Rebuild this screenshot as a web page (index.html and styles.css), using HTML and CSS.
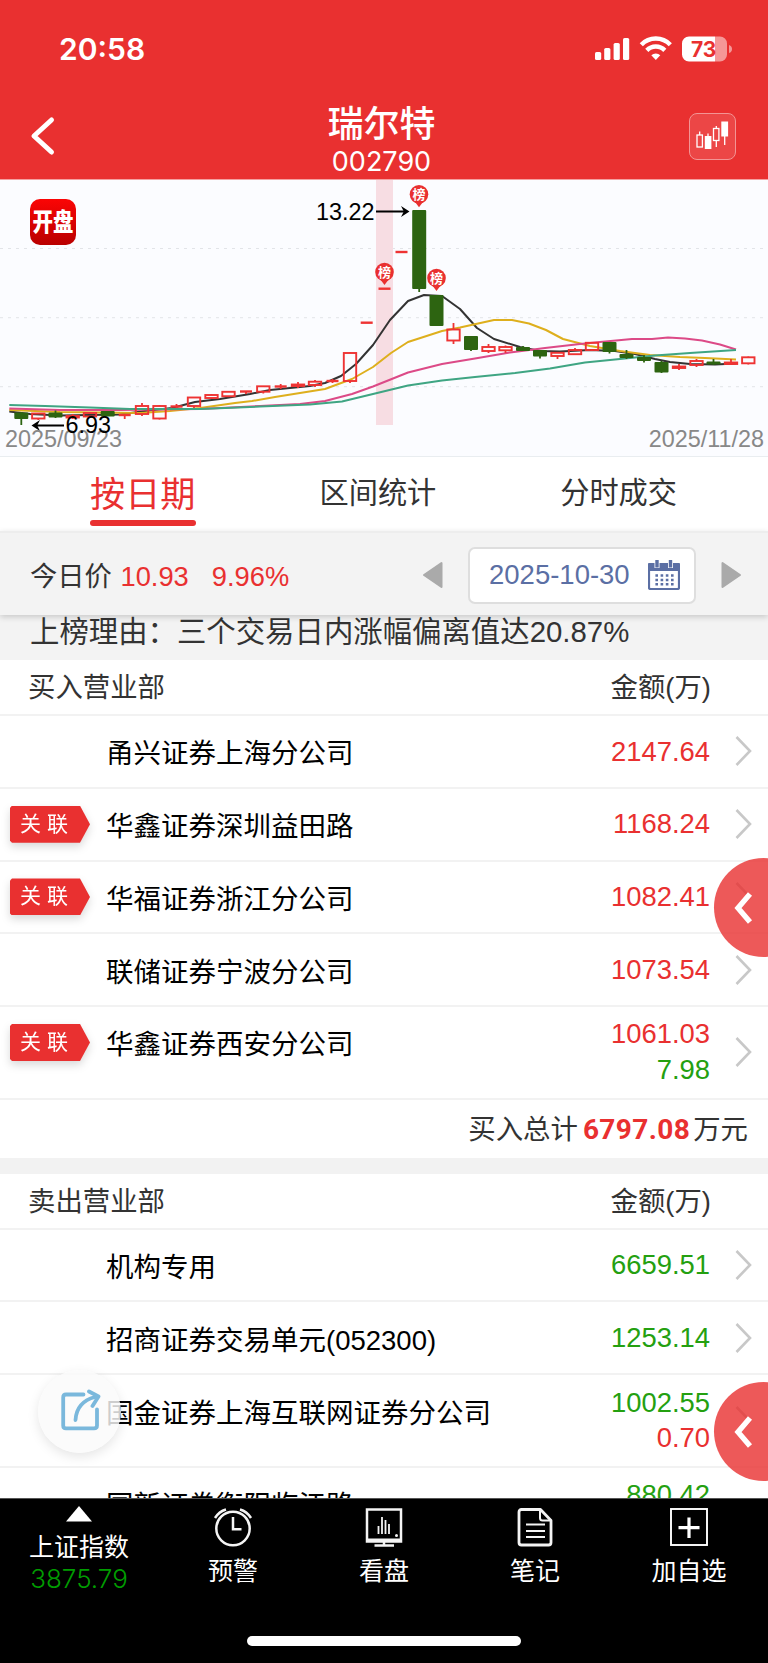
FILE: index.html
```html
<!DOCTYPE html>
<html lang="zh-CN">
<head>
  <meta charset="UTF-8">
  <meta name="viewport" content="width=device-width, initial-scale=1.0">
  <title>瑞尔特 002790</title>
  <link rel="stylesheet" href="styles.css">
</head>
<body>

<div class="page">
  <!-- Header -->
  <div class="header">
    <div class="status-bar">
      <span class="clock">20:58</span>
      <svg class="status-icons" width="138" height="26" viewBox="0 0 138 26">
        <g fill="#fff">
          <rect x="0" y="16" width="6.2" height="8" rx="1.6"/>
          <rect x="9.2" y="12" width="6.2" height="12" rx="1.6"/>
          <rect x="18.6" y="7" width="6.2" height="17" rx="1.6"/>
          <rect x="28" y="2" width="6.2" height="22" rx="1.6"/>
        </g>
        <g fill="none" stroke="#fff" stroke-width="4.4">
          <path d="M46.3 8.8 A20 20 0 0 1 75.3 8.8"/>
          <path d="M51.8 14.4 A12.5 12.5 0 0 1 69.8 14.4"/>
        </g>
        <path d="M60.8 24 L56.3 19.3 A6.3 6.3 0 0 1 65.3 19.3 Z" fill="#fff"/>
        <path d="M94 .5 H120 V25.5 H94 A7 7 0 0 1 87 18.5 V7.5 A7 7 0 0 1 94 .5 Z" fill="#fff"/>
        <path d="M120 .5 H125 A7 7 0 0 1 132 7.5 V18.5 A7 7 0 0 1 125 25.5 H120 Z" fill="#f59797"/>
        <path d="M134 9 Q137 10 137 13 Q137 16 134 17 Z" fill="#f59797"/>
        <text class="battery-text" x="108.6" y="20.5" text-anchor="middle">73</text>
      </svg>
    </div>
    <div class="nav">
      <svg class="back" width="30" height="40" viewBox="0 0 30 40">
        <path d="M24.5 4 L7 20 L24.5 36" fill="none" stroke="#fff" stroke-width="5" stroke-linecap="round" stroke-linejoin="round"/>
      </svg>
      <div class="title">
        <div class="stock-name">瑞尔特</div>
        <div class="stock-code">002790</div>
      </div>
      <div class="kline-btn">
        <svg width="34" height="30" viewBox="0 0 34 30">
          <g fill="none" stroke="#fff" stroke-width="1.3">
            <rect x="2" y="14" width="5.4" height="12"/>
            <path d="M4.7 10.500 V14 M13 12.500 V15 M21.300 5 V7.500 M21.300 19.500 V26 M29.700 15 V24"/>
            <rect x="18.500" y="7.500" width="5.400" height="12"/>
          </g>
          <rect x="9.800" y="15" width="6.600" height="13" fill="#fff"/>
          <rect x="26.300" y="0.500" width="6.800" height="15" fill="#fff"/>
        </svg>
      </div>
    </div>
  </div>

  <!-- K-line chart -->
  <div class="chart">
    <svg width="768" height="276" viewBox="0 0 768 276">
      <defs>
        <linearGradient id="logo" x1="0" y1="0" x2="0" y2="1">
          <stop offset="0" stop-color="#fb0505"/>
          <stop offset="1" stop-color="#b90000"/>
        </linearGradient>
        <g id="pin">
          <path d="M-6 5 L0 13 L6 5 Z"/>
          <circle r="9.3"/>
        </g>
      </defs>
      <path d="M0 68.5 H768 M0 137.7 H768 M0 206.7 H768" stroke="#e2e4e8" stroke-width="1" stroke-dasharray="3 5"/>
      <rect x="376" y="0" width="17" height="245" fill="#f7dde3"/>

      <rect x="30" y="19" width="46" height="46" rx="10" fill="url(#logo)"/>
      <text class="logo-text" transform="translate(53 50.5) scale(1 1.22)" text-anchor="middle">开盘</text>

      <g id="ma" fill="none" stroke-width="2" stroke-linejoin="round">
        <polyline stroke="#333" points="9.3,231.5 30,234 60,235.5 120,234.5 145,231 172,228 195,222 220,219 250,214 270,210 310,206 325,203 341,196 356,184 373,165 390,140 408,121 424,115 442,116 460,129 477,148 494,159 520,167 540,171 560,171.5 590,170 615,171 635,174 655,179 670,182 690,184 715,184.5 736,183.5"/>
        <polyline stroke="#deaf1d" points="9.3,230 60,232 100,232.5 140,233 170,231 200,228 235,223 252,221 275,217 325,209 352,199 373,187 391,173 408,162 442,151 460,147.5 494,140 512,140 529,143.5 546,150 563,159 590,166 620,171 650,175 680,177 705,178 736,179.5"/>
        <polyline stroke="#dc4a87" points="9.3,228.5 60,230 120,230 200,229 260,226 300,224 325,221 352,214 373,206.5 408,192.5 442,184 475,178.5 510,172.5 545,168 580,164 600,162 632,159 652,159 668,157.5 685,158.5 702,160.5 720,164.5 736,169.5"/>
        <polyline stroke="#3fa583" points="9.3,225 45,226 90,227.5 130,229 200,229 250,227 310,224.5 342,221.5 373,214 408,205.5 442,200.5 475,197 515,193 550,188.5 585,182.5 620,179 655,175.5 690,173 736,170"/>
      </g>
      <g id="candles"></g>

      <g fill="#e93030">
        <use href="#pin" x="419" y="14.3"/>
        <use href="#pin" x="384.5" y="92"/>
        <use href="#pin" x="436.5" y="98"/>
      </g>
      <g class="pin-text" text-anchor="middle">
        <text x="419" y="19">榜</text>
        <text x="384.5" y="96.7">榜</text>
        <text x="436.5" y="102.7">榜</text>
      </g>

      <path d="M376 31.5 H406 M64 245.5 H35" stroke="#000" stroke-width="2.2"/>
      <path d="M409.500 31.500 L401 26 L403.800 31.500 L401 37 Z M31.500 245.500 L40 240 L37.200 245.500 L40 251 Z" fill="#000"/>
      <g class="date-text">
        <text x="5" y="267">2025/09/23</text>
        <text x="764" y="267" text-anchor="end">2025/11/28</text>
      </g>
      <g class="price-text">
        <text x="316" y="39.5">13.22</text>
        <text x="65.5" y="252.5">6.93</text>
      </g>
    </svg>
  </div>

  <!-- Tabs -->
  <div class="tabs">
    <div class="tab active">按日期</div>
    <div class="tab">区间统计</div>
    <div class="tab">分时成交</div>
  </div>

  <div class="filter">
    <div class="today">今日价 <span class="red price">10.93</span><span class="red rate">9.96%</span></div>
    <div class="picker">
      <svg width="21" height="28" viewBox="0 0 21 28"><path d="M19.5 2 V26 L2 14 Z" fill="#aaa" stroke="#aaa" stroke-width="2" stroke-linejoin="round"/></svg>
      <div class="date-box">
        <span>2025-10-30</span>
        <svg width="32" height="30" viewBox="0 0 32 30">
          <rect x="1" y="4" width="30" height="25" rx="1.5" fill="#fff" stroke="#5b6fa4" stroke-width="2.2"/>
          <rect x="0" y="3" width="32" height="8" rx="1" fill="#5b6fa4"/>
          <path d="M9 2 V8 M22.500 2 V8" stroke="#fff" stroke-width="5"/>
          <path d="M9 0 V7.500 M22.500 0 V7.500" stroke="#5b6fa4" stroke-width="3.400"/>
          <path d="M7.400 15.500 H26 M7.400 20 H26 M7.400 24.300 H26" stroke="#5b6fa4" stroke-width="2.400" stroke-dasharray="2.600 2.600"/>
        </svg>
      </div>
      <svg width="21" height="28" viewBox="0 0 21 28"><path d="M1.5 2 V26 L19 14 Z" fill="#aaa" stroke="#aaa" stroke-width="2" stroke-linejoin="round"/></svg>
    </div>
  </div>
  <div class="reason">上榜理由：三个交易日内涨幅偏离值达20.87%</div>

  <!-- Buy / sell lists -->
  <div class="lists">
    <div class="list-head"><span>买入营业部</span><span>金额(万)</span></div>
    <div class="row">
      <div class="mark"></div>
      <div class="name">甬兴证券上海分公司</div>
      <div class="amount"><span class="red">2147.64</span></div>
      <svg class="arrow" viewBox="0 0 18 30"><path d="M1.5 1 L15 15 L1.5 29"/></svg>
    </div>
    <div class="row">
      <div class="mark"><span class="tag">关联</span></div>
      <div class="name">华鑫证券深圳益田路</div>
      <div class="amount"><span class="red">1168.24</span></div>
      <svg class="arrow" viewBox="0 0 18 30"><path d="M1.5 1 L15 15 L1.5 29"/></svg>
    </div>
    <div class="row">
      <div class="mark"><span class="tag">关联</span></div>
      <div class="name">华福证券浙江分公司</div>
      <div class="amount"><span class="red">1082.41</span></div>
      <svg class="arrow" viewBox="0 0 18 30"><path d="M1.5 1 L15 15 L1.5 29"/></svg>
    </div>
    <div class="row">
      <div class="mark"></div>
      <div class="name">联储证券宁波分公司</div>
      <div class="amount"><span class="red">1073.54</span></div>
      <svg class="arrow" viewBox="0 0 18 30"><path d="M1.5 1 L15 15 L1.5 29"/></svg>
    </div>
    <div class="row double">
      <div class="mark"><span class="tag">关联</span></div>
      <div class="name">华鑫证券西安分公司</div>
      <div class="amount"><span class="red">1061.03</span><span class="green">7.98</span></div>
      <svg class="arrow" viewBox="0 0 18 30"><path d="M1.5 1 L15 15 L1.5 29"/></svg>
    </div>
    <div class="total">买入总计<b>6797.08</b>万元</div>

    <div class="list-head"><span>卖出营业部</span><span>金额(万)</span></div>
    <div class="row">
      <div class="mark"></div>
      <div class="name">机构专用</div>
      <div class="amount"><span class="green">6659.51</span></div>
      <svg class="arrow" viewBox="0 0 18 30"><path d="M1.5 1 L15 15 L1.5 29"/></svg>
    </div>
    <div class="row">
      <div class="mark"></div>
      <div class="name">招商证券交易单元(052300)</div>
      <div class="amount"><span class="green">1253.14</span></div>
      <svg class="arrow" viewBox="0 0 18 30"><path d="M1.5 1 L15 15 L1.5 29"/></svg>
    </div>
    <div class="row double">
      <div class="mark"></div>
      <div class="name">国金证券上海互联网证券分公司</div>
      <div class="amount"><span class="green">1002.55</span><span class="red">0.70</span></div>
      <svg class="arrow" viewBox="0 0 18 30"><path d="M1.5 1 L15 15 L1.5 29"/></svg>
    </div>
    <div class="row double">
      <div class="mark"></div>
      <div class="name">国新证券衡阳临江路</div>
      <div class="amount"><span class="green">880.42</span></div>
      <svg class="arrow" viewBox="0 0 18 30"><path d="M1.5 1 L15 15 L1.5 29"/></svg>
    </div>
  </div>

  <!-- Floating buttons -->
  <div class="side-btn side-buy">
    <svg width="20" height="32" viewBox="0 0 20 32"><path d="M17 2 L5 16 L17 30" fill="none" stroke="#fff" stroke-width="5.4"/></svg>
  </div>
  <div class="side-btn side-sell">
    <svg width="20" height="32" viewBox="0 0 20 32"><path d="M17 2 L5 16 L17 30" fill="none" stroke="#fff" stroke-width="5.4"/></svg>
  </div>
  <div class="share-btn">
    <svg width="40" height="42" viewBox="0 0 40 42">
      <g fill="none" stroke="#7ab8dc" stroke-width="3.8" stroke-linecap="round" stroke-linejoin="round">
        <path d="M22.5 5.5 H5 Q2.2 5.5 2.2 8.5 V36.5 Q2.2 39.3 5 39.3 H33 Q36 39.3 36 36.5 V20.5"/>
        <path d="M14.5 31 Q15.5 13 34 8"/>
        <path d="M28 2.500 L37.500 7.500 L31.500 17"/>
      </g>
    </svg>
  </div>

  <!-- Footer -->
  <div class="footer">
    <div class="index-item">
      <svg width="26" height="16" viewBox="0 0 26 16"><path d="M13 0 L26 15.500 H0 Z" fill="#fff"/></svg>
      <div class="index-name">上证指数</div>
      <div class="index-value">3875.79</div>
    </div>
    <div class="foot-item">
      <svg width="40" height="40" viewBox="0 0 40 40" fill="none" stroke="#f4f4f4" stroke-width="2.500">
        <circle cx="20" cy="21.500" r="16.700"/>
        <path d="M20 10 V22.300 H28.500"/>
        <path d="M2 11 Q6 4.500 13 2.500 M38 11 Q34 4.500 27 2.500"/>
      </svg>
      <div>预警</div>
    </div>
    <div class="foot-item">
      <svg width="40" height="40" viewBox="0 0 40 40" fill="none" stroke="#f4f4f4" stroke-width="2.500">
        <rect x="3" y="2.500" width="34" height="32"/>
        <path d="M3 33 H37" stroke-width="3"/>
        <path d="M14.500 19 V27 M18 10 V27 M21.500 13 V27 M25 17 V27" stroke-width="1.800"/>
        <path d="M20 34 V38 M10.500 38.500 H30"/>
        <circle cx="32.500" cy="28.500" r="1.500" fill="#f4f4f4" stroke="none"/>
      </svg>
      <div>看盘</div>
    </div>
    <div class="foot-item">
      <svg width="40" height="40" viewBox="0 0 40 40" fill="none" stroke="#f4f4f4" stroke-width="2.800" stroke-linejoin="round">
        <path d="M6.500 2.500 H25.500 L36 13.500 V35.500 Q36 38 33.500 38 H6.500 Q4 38 4 35.500 V5 Q4 2.500 6.500 2.500 Z"/>
        <path d="M25 3 V11 Q25 13.500 27.500 13.500 H35.500" stroke-width="2"/>
        <path d="M11 17.500 H30 M11 24 H30 M11 30 H30" stroke-width="2"/>
      </svg>
      <div>笔记</div>
    </div>
    <div class="foot-item">
      <svg width="40" height="40" viewBox="0 0 40 40" fill="none" stroke="#fff">
        <rect x="2" y="2" width="36" height="36" stroke-width="1.900"/>
        <path d="M20 10.500 V31 M9.500 20.700 H30.500" stroke-width="3.200"/>
      </svg>
      <div>加自选</div>
    </div>
    <div class="home-bar"></div>
  </div>
</div>

<script src="chart.js"></script>
</body>
</html>
```
FILE: styles.css
```css
* {
  box-sizing: border-box;
}

body {
  margin: 0;
  background-color: #fff;
  color: #333;
  font-family: "Liberation Sans", "Noto Sans CJK SC", sans-serif;
}

svg {
  display: block;
  flex-shrink: 0;
}

.page {
  position: relative;
  display: flex;
  flex-direction: column;
  width: 768px;
  height: 1663px;
  overflow: hidden;
}

.red {
  color: #e93030;
}

.green {
  color: #24a010;
}

/* Header */
.header {
  height: 180px;
  flex-shrink: 0;
  background-color: #e93030;
  border-bottom: 1px solid #f4a0a0;
  color: #fff;
}

.status-bar {
  display: flex;
  justify-content: space-between;
  align-items: center;
  height: 98px;
  padding: 0 35px 0 59px;
}

.clock {
  font-family: Inter, sans-serif;
  font-size: 30px;
  font-weight: 600;
}

.battery-text {
  font-family: Inter, sans-serif;
  font-size: 21px;
  font-weight: 700;
  fill: #e93030;
}

.nav {
  display: flex;
  justify-content: space-between;
  align-items: center;
  height: 76px;
  padding: 0 32px 0 27px;
}

.title {
  padding: 10px 0 0 17px;
  text-align: center;
}

.stock-name {
  font-size: 36px;
  font-weight: 500;
  line-height: 42px;
}

.stock-code {
  font-family: Inter, sans-serif;
  font-size: 27px;
  line-height: 32px;
}

.kline-btn {
  display: flex;
  justify-content: center;
  align-items: center;
  width: 47px;
  height: 47px;
  border: 1px solid #f39494;
  border-radius: 8px;
  background-color: #ec4646;
}

/* Chart */
.chart {
  height: 277px;
  flex-shrink: 0;
  background-color: #fbfcff;
  border-bottom: 1px solid #e9edf0;
}

.logo-text {
  font-size: 20.5px;
  font-weight: 900;
  fill: #fff;
}

.pin-text {
  font-size: 13px;
  font-weight: 700;
  fill: #fff;
}

.date-text {
  font-size: 23.4px;
  fill: #888;
}

.price-text {
  font-size: 23.4px;
  fill: #000;
}

/* Tabs */
.tabs {
  display: flex;
  justify-content: space-between;
  height: 74px;
  flex-shrink: 0;
  padding: 0 91px 0 90px;
}

.tab {
  font-size: 29.2px;
  line-height: 72px;
}

.tab.active {
  color: #e93030;
  font-size: 35.2px;
  line-height: 75px;
}

.tab.active::after {
  content: "";
  display: block;
  height: 6px;
  margin-top: -12px;
  border-radius: 3px;
  background-color: #e93030;
}

/* Price and date picker */
.filter {
  position: relative;
  display: flex;
  justify-content: space-between;
  align-items: center;
  height: 84px;
  flex-shrink: 0;
  padding: 2px 26px 0 30px;
  background-color: #f3f3f3;
  border-top: 2px solid #ededed;
  box-shadow: 0 2px 6px rgba(0, 0, 0, 0.18);
}

.today {
  padding-bottom: 3px;
  font-size: 27.3px;
}

.price {
  margin-left: 1px;
}

.rate {
  margin-left: 23px;
}

.picker {
  display: flex;
  align-items: center;
  gap: 25px;
}

.date-box {
  display: flex;
  justify-content: space-between;
  align-items: center;
  width: 228px;
  height: 57px;
  padding: 0 14px 1px 19px;
  background-color: #fff;
  border: 2px solid #dedede;
  border-radius: 7px;
  color: #5b6fa4;
  font-size: 27.5px;
}

.reason {
  height: 45px;
  flex-shrink: 0;
  padding-left: 30px;
  background-color: #f3f3f3;
  font-size: 29.4px;
  line-height: 33px;
  white-space: nowrap;
}

/* Lists */
.lists {
  flex: 1;
  min-height: 0;
  overflow: hidden;
  font-size: 27.4px;
}

.list-head {
  display: flex;
  justify-content: space-between;
  height: 56px;
  padding: 0 57px 0 28px;
  border-bottom: 2px solid #f2f2f2;
  line-height: 56px;
}

.row {
  display: flex;
  align-items: center;
  height: 72.8px;
  padding: 0 15px 0 10px;
  border-bottom: 2px solid #f2f2f2;
  color: #000;
}

.row.double {
  height: 92.5px;
}

.mark {
  width: 96px;
  filter: drop-shadow(0 4px 4px rgba(0, 0, 0, 0.15));
}

.double .mark,
.double .name {
  margin-bottom: 20px;
}

.tag {
  display: block;
  width: 80px;
  height: 37px;
  padding-left: 10px;
  background-color: #e93030;
  clip-path: polygon(0 2px, 2px 0, 70px 0, 80px 50%, 70px 100%, 2px 100%, 0 35px);
  color: #fff;
  font-size: 21px;
  letter-spacing: 6px;
  line-height: 36px;
}

.name {
  flex: 1;
  font-size: 27.5px;
}

.amount {
  display: flex;
  flex-direction: column;
  text-align: right;
  line-height: 35.5px;
}

.double .amount {
  height: 72px;
}

.arrow {
  width: 18px;
  height: 30px;
  margin-left: 25px;
  fill: none;
  stroke: #c8c8c8;
  stroke-width: 2.6;
}

.total {
  height: 74px;
  padding-right: 20px;
  border-bottom: 16px solid #f2f2f2;
  line-height: 59px;
  text-align: right;
}

.total b {
  margin: 0 3px 0 5px;
  color: #e93030;
  font-family: Roboto, sans-serif;
  font-size: 28px;
  letter-spacing: 0.4px;
}

/* Floating buttons */
.side-btn {
  position: absolute;
  right: -45px;
  display: flex;
  align-items: center;
  width: 99px;
  height: 99px;
  padding-left: 19px;
  border-radius: 50%;
  background-color: rgba(233, 48, 48, 0.8);
}

.side-buy {
  top: 858px;
}

.side-sell {
  top: 1382px;
}

.share-btn {
  position: absolute;
  left: 38px;
  top: 1370px;
  display: flex;
  justify-content: center;
  align-items: center;
  width: 83px;
  height: 83px;
  padding: 0 0 4px 2px;
  border-radius: 50%;
  background-color: rgba(250, 250, 250, 0.82);
  box-shadow: 0 4px 12px rgba(0, 0, 0, 0.1);
}

/* Footer */
.footer {
  position: relative;
  display: grid;
  grid-template-columns: 158px 150px 152px 150px 158px;
  height: 165px;
  flex-shrink: 0;
  background-color: #000;
  border-top: 1px solid #555;
  color: #fff;
  font-size: 25px;
}

.index-item,
.foot-item {
  display: flex;
  flex-direction: column;
  align-items: center;
  line-height: 40px;
}

.index-item {
  padding-top: 7px;
}

.index-name {
  margin-top: 5px;
}

.index-value {
  margin-top: -8px;
  color: #009c00;
  font-family: Inter, sans-serif;
  font-size: 26px;
  font-weight: 300;
}

.foot-item {
  padding-top: 8px;
}

.foot-item div {
  margin-top: 4px;
}

.home-bar {
  position: absolute;
  left: 247px;
  bottom: 17px;
  width: 274px;
  height: 10px;
  border-radius: 5px;
  background-color: #fff;
}
```
FILE: chart.js
```js
// x, body top, body bottom, wick top, wick bottom, up (1) or down (0)
const candles = [
  [21.3, 232.5, 239, 232, 245, 0],
  [38.3, 233.5, 238.5, 233, 240, 1],
  [55.5, 232.5, 237.5, 230.5, 238, 0],
  [72.7, 236, 237.5, 234, 239, 1],
  [90, 233, 236.5, 232, 237, 1],
  [107.7, 231, 236.5, 231, 236, 0],
  [124.7, 235, 235, 234, 239, 1],
  [142, 226, 234, 223, 236, 1],
  [159.5, 226, 238.5, 225, 239.5, 1],
  [176.5, 226.5, 226.5, 224, 228, 1],
  [194, 217.5, 226, 217, 228, 1],
  [211.5, 215, 218, 214, 219, 1],
  [228.5, 211.8, 216.2, 211, 217, 1],
  [246, 211.5, 211.5, 211, 214, 1],
  [263.3, 206.3, 211.7, 206, 213.5, 1],
  [280.7, 206.5, 206.5, 204, 209, 1],
  [298, 204.5, 206, 202, 208, 1],
  [315, 201.7, 205, 200, 207, 1],
  [332.5, 201, 201, 199, 203, 1],
  [350, 173, 201, 172.5, 203, 1],
  [366.7, 142.7, 142.7, 142.7, 142.7, 1],
  [384.5, 108.7, 108.7, 108.7, 108.7, 1],
  [401.5, 72, 72, 72, 72, 1],
  [419.2, 30, 109, 30, 112, 0],
  [436.5, 115, 146, 115, 146, 0],
  [453.5, 149.5, 160.5, 143, 164, 1],
  [471, 156, 170, 156, 171, 0],
  [488.5, 167, 171, 164, 173, 1],
  [505.5, 167, 170.3, 165.5, 173, 1],
  [523, 167, 171, 166, 171, 0],
  [540, 170, 176.5, 170, 178.5, 0],
  [557.5, 172.8, 176, 172, 179, 1],
  [575, 170, 174.2, 168, 175, 1],
  [592, 162.8, 170, 162, 171, 1],
  [609.5, 162, 172, 162, 173.5, 0],
  [626.5, 174, 178, 170, 179, 0],
  [644, 177, 181, 175, 182.5, 0],
  [661.5, 182, 192.5, 181, 193, 0],
  [679, 186.5, 188, 184, 190, 1],
  [696.5, 181, 185, 179, 187, 1],
  [713.5, 181.5, 184.5, 179, 185, 0],
  [731, 182.5, 184, 179, 185, 1],
  [748.3, 177.3, 183.3, 176.5, 184.5, 1]
];

const RED = "#ee3333";
const GREEN = "#2d6411";
let out = "";
candles.forEach(([x, top, bottom, high, low, up]) => {
  if (up) {
    out += `<path d="M${x} ${high} V${top} M${x} ${bottom} V${low}" stroke="${RED}" stroke-width="1.8"/>`;
    if (bottom === top) {
      out += `<path d="M${x - 6} ${top} H${x + 6}" stroke="${RED}" stroke-width="2.4"/>`;
    } else {
      out += `<rect x="${x - 6.2}" y="${top}" width="12.4" height="${bottom - top}" fill="none" stroke="${RED}" stroke-width="1.9"/>`;
    }
  } else {
    out += `<path d="M${x} ${high} V${low}" stroke="${GREEN}" stroke-width="1.8"/>`;
    out += `<rect x="${x - 7}" y="${top}" width="14" height="${bottom - top}" rx="1" fill="${GREEN}"/>`;
  }
});
document.getElementById("candles").innerHTML = out;
```
